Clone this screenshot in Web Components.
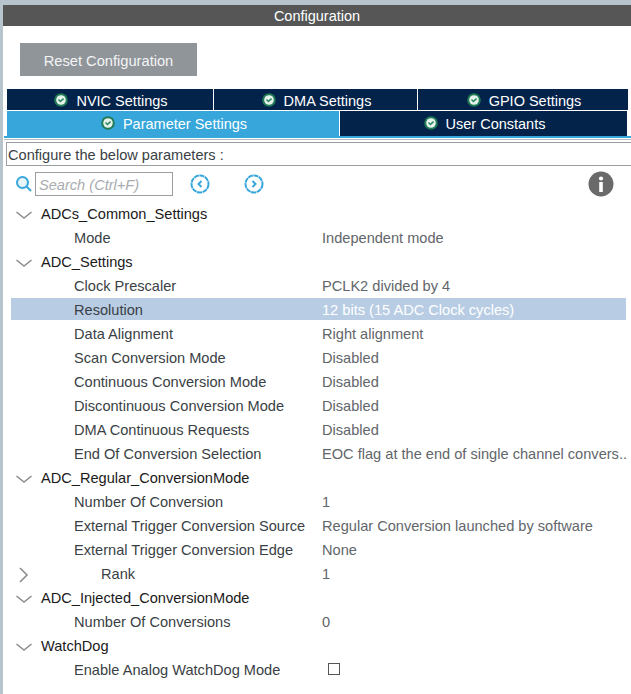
<!DOCTYPE html>
<html><head><meta charset="utf-8"><style>
html,body{margin:0;padding:0;background:#fff}
body{width:631px;height:694px;overflow:hidden;font-family:"Liberation Sans",Arial,sans-serif}
</style></head><body>
<template id="t-tab"><style>
:host{display:flex;align-items:center;justify-content:center;gap:8px;background:var(--bg,#03234b);color:#fff;font-size:14.5px;box-sizing:border-box;min-width:0;padding:var(--pt,2px) 0 0 2px}
svg{width:14px;height:14px;flex:none;margin-top:-1px}
</style><svg viewBox="0 0 14 14"><circle cx="7" cy="7" r="6.8" fill="#1f7a55"/><circle cx="7" cy="7" r="4.8" fill="#e6f2ec"/><path d="M4.5 6.4 6.4 8.4 9.6 5.6" fill="none" stroke="#2b8a60" stroke-width="1.5"/></svg><slot></slot></template>

<template id="t-row"><style>
:host{display:flex;align-items:center;height:24px;font-size:14.6px;color:#3a3f45;position:relative;box-sizing:border-box}
.tw{width:71px;flex:none;position:relative;height:100%}
.tw svg{position:absolute;left:13px;top:8px;width:16px;height:10px}
:host([level="0"]) .tw{width:38px}
:host([level="0"]){color:#1a1a1a}
:host([indent]) .tw{width:98px}
.lab{width:248px;flex:none;white-space:nowrap}
:host([indent]) .lab{width:221px}
:host([level="0"]) .lab{width:auto}
.v{color:#62666a;white-space:nowrap;flex:1}
:host([selected])::before{content:"";position:absolute;left:8px;width:615px;top:0;bottom:2px;background:#b8cde4}
.lab,.v,.tw{position:relative}
:host([selected]) .v{color:#fff}
</style><span class="tw"></span><span class="lab"><slot></slot></span><span class="v"><slot name="v"></slot></span></template>

<template id="t-app"><style>
:host{display:block;width:631px;height:694px;box-sizing:border-box;background:#fff;border-top:5px solid #b8c4cc;border-left:3px solid #b8c4cc}
.hd{height:21px;background:#555655;color:#fff;font-size:14.5px;display:flex;align-items:center;justify-content:center;padding-top:1px;box-sizing:border-box}
.btnrow{padding:17px 0 13px 17px;height:33px}
.btn{width:177px;height:33px;background:#90959a;color:#f4f4f4;font-size:14.67px;display:flex;align-items:center;justify-content:center;padding-top:2px;box-sizing:border-box}
.r1{display:grid;grid-template-columns:206px 203px 210px;gap:1px;margin-left:4px;width:620px;height:21px}
.r2{display:grid;grid-template-columns:332px 287px;gap:1px;margin-left:4px;width:620px;height:25px;margin-top:1px;--pt:0px}
.rule{margin-left:1px;height:2px;background:#37a7db}
.rule2{margin-left:1px;height:1px;background:#b4b9bd;margin-top:1px}
.cfg{margin-left:3px;height:24px;margin-top:2px;box-sizing:border-box;border:1px solid #9a9ea2;border-right:0;font-size:14.6px;color:#3a3f45;display:flex;align-items:center;padding:2px 0 0 1px}
.tools{height:36px;display:flex;align-items:center;position:relative;padding:0 0 0 12px;box-sizing:border-box}
.tools svg{flex:none}
.search{width:138px;height:24px;box-sizing:border-box;border:1px solid #9a9ea2;margin-left:2px;font-size:14.6px;font-style:italic;color:#a8acb0;display:flex;align-items:center;padding:1px 0 0 3px}
</style>
<div class="hd">Configuration</div>
<div class="btnrow"><div class="btn">Reset Configuration</div></div>
<div class="r1"><x-tab>NVIC Settings</x-tab><x-tab>DMA Settings</x-tab><x-tab>GPIO Settings</x-tab></div>
<div class="r2"><x-tab style="--bg:#37a7db">Parameter Settings</x-tab><x-tab>User Constants</x-tab></div>
<div class="rule"></div><div class="rule2"></div>
<div class="cfg">Configure the below parameters :</div>
<div class="tools">
<svg width="18" height="18" viewBox="0 0 18 18"><circle cx="7.5" cy="7.5" r="5.5" fill="#e8f5fb" stroke="#37a7db" stroke-width="2"/><path d="M11.5 11.5 16 16" stroke="#37a7db" stroke-width="2"/></svg>
<div class="search">Search (Ctrl+F)</div>
<svg style="margin-left:17px" width="20" height="20" viewBox="0 0 20 20"><circle cx="10" cy="10" r="8.5" fill="#fff" stroke="#37a7db" stroke-width="2" stroke-dasharray="5 .6"/><path d="M11.5 7 8.5 10l3 3" fill="none" stroke="#37a7db" stroke-width="2"/></svg>
<svg style="margin-left:34px" width="20" height="20" viewBox="0 0 20 20"><circle cx="10" cy="10" r="8.5" fill="#fff" stroke="#37a7db" stroke-width="2" stroke-dasharray="5 .6"/><path d="M8.5 7 11.5 10l-3 3" fill="none" stroke="#37a7db" stroke-width="2"/></svg>
<svg style="margin-left:324px" width="26" height="26" viewBox="0 0 26 26"><circle cx="13" cy="13" r="12.5" fill="#6a6a6a"/><rect x="11.2" y="11" width="3.6" height="10" fill="#fff"/><circle cx="13" cy="7.5" r="2.1" fill="#fff"/></svg>
</div>
<slot></slot>
</template>

<x-app>
<x-row level="0" tw="down">ADCs_Common_Settings</x-row>
<x-row>Mode<span slot="v">Independent mode</span></x-row>
<x-row level="0" tw="down">ADC_Settings</x-row>
<x-row>Clock Prescaler<span slot="v">PCLK2 divided by 4</span></x-row>
<x-row selected>Resolution<span slot="v">12 bits (15 ADC Clock cycles)</span></x-row>
<x-row>Data Alignment<span slot="v">Right alignment</span></x-row>
<x-row>Scan Conversion Mode<span slot="v">Disabled</span></x-row>
<x-row>Continuous Conversion Mode<span slot="v">Disabled</span></x-row>
<x-row>Discontinuous Conversion Mode<span slot="v">Disabled</span></x-row>
<x-row>DMA Continuous Requests<span slot="v">Disabled</span></x-row>
<x-row>End Of Conversion Selection<span slot="v">EOC flag at the end of single channel convers..</span></x-row>
<x-row level="0" tw="down">ADC_Regular_ConversionMode</x-row>
<x-row>Number Of Conversion<span slot="v">1</span></x-row>
<x-row>External Trigger Conversion Source<span slot="v">Regular Conversion launched by software</span></x-row>
<x-row>External Trigger Conversion Edge<span slot="v">None</span></x-row>
<x-row indent tw="right">Rank<span slot="v">1</span></x-row>
<x-row level="0" tw="down">ADC_Injected_ConversionMode</x-row>
<x-row>Number Of Conversions<span slot="v">0</span></x-row>
<x-row level="0" tw="down">WatchDog</x-row>
<x-row>Enable Analog WatchDog Mode<span slot="v"><x-check></x-check></span></x-row>
</x-app>
<script>
function mk(id){return class extends HTMLElement{constructor(){super();this.attachShadow({mode:'open'}).appendChild(document.getElementById(id).content.cloneNode(true));}}}
customElements.define('x-tab',mk('t-tab'));
customElements.define('x-app',mk('t-app'));
customElements.define('x-check',class extends HTMLElement{constructor(){super();this.attachShadow({mode:'open'}).innerHTML='<style>:host{display:block;width:12px;height:12px;box-sizing:border-box;border:1.5px solid #555;margin:0 0 2px 6px;background:#fff}</style>';}});
const R=mk('t-row');
customElements.define('x-row',class extends R{connectedCallback(){const t=this.getAttribute('tw'),w=this.shadowRoot.querySelector('.tw');
if(t==='down')w.innerHTML='<svg viewBox="0 0 16 10"><path d="M.5 2 8 8l7.5-6" fill="none" stroke="#8a8f93" stroke-width="1.6"/></svg>';
if(t==='right')w.innerHTML='<svg viewBox="0 0 16 16" style="left:13px;width:16px;height:16px;top:5px"><path d="M4 1 11 8 4 15" fill="none" stroke="#8a8f93" stroke-width="1.6"/></svg>';}});
</script>
</body></html>
